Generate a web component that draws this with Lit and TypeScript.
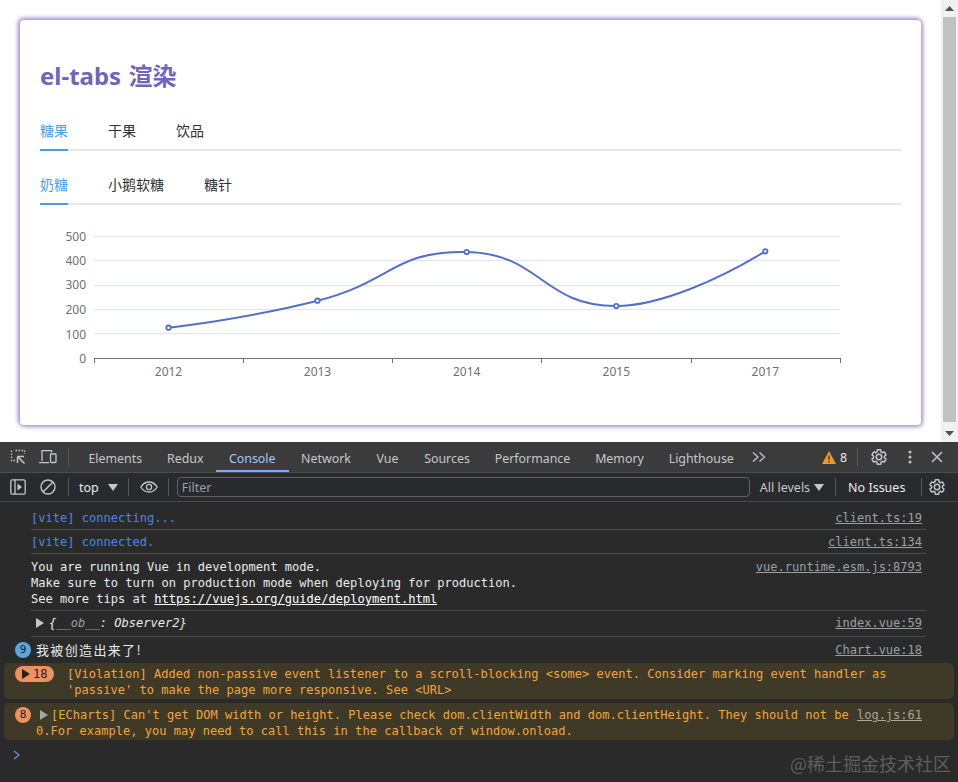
import { LitElement, html, css, svg } from "lit";
import { customElement } from "lit/decorators.js";

const GEAR = "M19.14 12.94c.04-.3.06-.61.06-.94 0-.32-.02-.64-.07-.94l2.03-1.58a.49.49 0 0 0 .12-.61l-1.92-3.32a.488.488 0 0 0-.59-.22l-2.39.96c-.5-.38-1.03-.7-1.62-.94l-.36-2.54a.484.484 0 0 0-.48-.41h-3.84c-.24 0-.43.17-.47.41l-.36 2.54c-.59.24-1.13.57-1.62.94l-2.39-.96c-.22-.08-.47 0-.59.22L2.74 8.87c-.12.21-.08.47.12.61l2.03 1.58c-.05.3-.09.63-.09.94s.02.64.07.94l-2.03 1.58a.49.49 0 0 0-.12.61l1.92 3.32c.12.22.37.29.59.22l2.39-.96c.5.38 1.03.7 1.62.94l.36 2.54c.05.24.24.41.48.41h3.84c.24 0 .44-.17.47-.41l.36-2.54c.59-.24 1.13-.56 1.62-.94l2.39.96c.22.08.47 0 .59-.22l1.92-3.32c.12-.22.07-.47-.12-.61l-2.01-1.58zM12 15.6c-1.98 0-3.6-1.62-3.6-3.6s1.62-3.6 3.6-3.6 3.6 1.62 3.6 3.6-1.62 3.6-3.6 3.6z";

const gear = () => html`<svg class="gear" width="18" height="18" viewBox="0 0 24 24"><path d=${GEAR} fill="none" stroke="#c4c7cc" stroke-width="1.9"/></svg>`;

const tri = (fill: string) => html`<svg class="tri" width="8" height="10" viewBox="0 0 8 10"><path d="M0 0 L8 5 L0 10Z" fill=${fill}/></svg>`;

const TABS: [string, number][] = [
  ["Elements", 78.5],
  ["Redux", 61.5],
  ["Console", 72.5],
  ["Network", 75],
  ["Vue", 48],
  ["Sources", 71],
  ["Performance", 100],
  ["Memory", 74],
  ["Lighthouse", 89.5],
];
const GRID = [237.5, 261.5, 286.5, 310.5, 334.5];
const YLABELS = ["500", "400", "300", "200", "100", "0"];
const YPOS = [237, 261.5, 285.5, 310.5, 335, 359];
const TICKS = [94.5, 243.5, 392.5, 541.5, 691.5, 840.5];
const POINTS: [number, number, string][] = [
  [168.5, 328.7, "2012"],
  [317.5, 301.7, "2013"],
  [466.7, 253, "2014"],
  [616.3, 307, "2015"],
  [765.3, 252.3, "2017"],
];
const CURVE = "M168.5 328.7 C168.5 328.7 244.5 320.2 317.5 301.7 C393.5 282.4 392.7 251.7 466.7 253 C541 254.3 542 307.2 616.3 307 C660 307 720 280 765.3 252.3";

@customElement("app-root")
export class AppRoot extends LitElement {
  static styles = css`
    :host { display: block; width: 958px; height: 782px; overflow: hidden; position: relative; font-family: "Noto Sans", "Noto Sans CJK SC", sans-serif; background: #292a2d; }
    * { box-sizing: border-box; }
    .page { height: 442px; background: #fff; display: flex; }
    .view { flex: 1; padding: 20px 20px 0; min-width: 0; }
    .card { width: 901px; height: 405px; padding: 0 20px; border-radius: 4px; background: #fff; box-shadow: -1px -1px 4px 1px rgba(150, 115, 195, .75), 1px 1px 4px 1px rgba(140, 120, 170, .6); }
    h2 { margin: 0; padding-top: 39px; height: 91px; font-size: 24px; line-height: 34px; font-weight: 700; color: #7065b8; word-spacing: 1px; font-family: "Noto Sans", "Noto Sans CJK SC", sans-serif; }
    .tabs { display: flex; height: 40px; border-bottom: 2px solid #e4e7ed; margin-bottom: 14px; gap: 40px; font-size: 14px; font-family: "Noto Sans CJK SC", sans-serif; }
    .tabs span { height: 40px; line-height: 38px; color: #303133; }
    .tabs span.on { color: #4a9fee; border-bottom: 2px solid #4f9be2; }
    .chart { display: block; margin-top: 1px; }
    .chart text { font-family: "Noto Sans", sans-serif; font-size: 12px; fill: #6e7079; }

    .sb { width: 17px; background: #f1f1f1; display: flex; flex-direction: column; align-items: center; }
    .sb .arrow { height: 17px; flex: none; display: flex; align-items: center; justify-content: center; }
    .sb .thumb { flex: 1; width: 13px; background: #c1c1c1; margin-bottom: 3px; }

    .dev { height: 340px; background: #292a2d; color: #e8eaed; display: flex; flex-direction: column; position: relative; }
    .bar1 { height: 31px; flex: none; background: #3b3b3b; border-bottom: 1px solid #4a4a4a; display: flex; align-items: center; padding-left: 10px; font-size: 12.4px; }
    .bar2 { height: 29px; flex: none; background: #292a2d; border-bottom: 1px solid #4a4a4a; display: flex; align-items: center; padding-left: 10px; font-size: 12.5px; }
    .sep { width: 1px; height: 18px; background: #55585c; flex: none; }
    .t { height: 30px; line-height: 33px; color: #c4c7cc; white-space: nowrap; text-align: center; flex: none; }
    .t.on { color: #a8c7fa; border-bottom: 2px solid #7cacf8; }
    .warn8 { margin-left: auto; display: flex; align-items: center; gap: 4px; color: #e8eaed; }
    .filter { width: 573px; height: 20px; border: 1px solid #5f6368; border-radius: 4px; margin-left: 8px; color: #9aa0a6; padding-left: 4px; line-height: 19px; }

    .log { flex: 1; padding-top: 8px; font-family: "DejaVu Sans Mono", "Noto Sans CJK SC", monospace; font-size: 12.06px; line-height: 16px; background: #2a2a2a; }
    .row { margin-left: 31px; width: 895px; padding: 0 4px 3px 0; border-bottom: 1px solid #4a4a4a; display: flex; justify-content: space-between; white-space: pre; }
    .row + .row { padding-top: 4px; }
    .row.r3 { padding-top: 5px; }
    .row.r4 { padding-top: 4px; padding-bottom: 5px; padding-left: 5px; align-items: center; }
    .link { color: #9aa0a6; text-decoration: underline; font-size: 12px; }
    .blue { color: #4d84ee; }
    .u { text-decoration: underline; color: #fff; }
    .it { font-style: italic; margin-left: 5px; }
    .it i { color: #9aa0a6; }
    .obj { display: flex; align-items: center; }
    .info { display: flex; align-items: center; padding: 5px 4px 5px 15px; margin-right: 32px; }
    .badge { width: 16px; height: 16px; border-radius: 50%; flex: none; display: flex; align-items: center; justify-content: center; font-size: 11px; line-height: 16px; color: #202124; }
    .badge.b { background: #5ba7dc; }
    .badge.o { background: #f0905f; }
    .cn { margin-left: 5px; font-family: "Noto Sans CJK SC", sans-serif; font-size: 13px; letter-spacing: 1.35px; flex: 1; color: #e8eaed; }
    .w { margin: 0 4px; background: #3f3927; color: #f0a63e; border-radius: 5px; }
    .w .link { color: #a9a69c; }
    .w1 { padding: 3px 0 1px 11px; display: flex; height: 36px; }
    .w1 .msg { white-space: pre; }
    .w2 { margin-top: 4px; padding: 4px 32px 1px 11px; height: 37px; display: flex; flex-direction: column; }
    .pill { width: 39px; height: 16px; border-radius: 8px; background: #f0905f; color: #202124; display: flex; align-items: center; padding-left: 7px; gap: 3px; flex: none; margin-right: 13px; font-size: 12px; }
    .l1 { display: flex; align-items: center; white-space: nowrap; height: 16px; }
    .l1 .tri { margin: 0 3px 0 9px; flex: none; }
    .l1 .link { margin-left: auto; }
    .l2 { padding-left: 21px; white-space: nowrap; height: 16px; }
    .prompt { padding: 10px 0 0 13px; display: flex; }
    .wm { position: absolute; left: 790px; top: 308px; font-family: "Noto Sans CJK SC", sans-serif; font-size: 18px; line-height: 26px; color: #5e5e5e; white-space: nowrap; }
  `;

  chart() {
    return svg`
      ${GRID.map((y) => svg`<line x1="94" x2="840" y1=${y} y2=${y} stroke="#e0e6f1"/>`)}
      <line x1="94" x2="841" y1="359.5" y2="359.5" stroke="#6e7079"/>
      ${TICKS.map((x) => svg`<line x1=${x} x2=${x} y1="359" y2="364" stroke="#6e7079"/>`)}
      ${YLABELS.map((l, i) => svg`<text x="86" y=${YPOS[i]} text-anchor="end" dominant-baseline="central">${l}</text>`)}
      ${POINTS.map((p) => svg`<text x=${p[0]} y="372" text-anchor="middle" dominant-baseline="central">${p[2]}</text>`)}
      <path d=${CURVE} fill="none" stroke="#5470c6" stroke-width="2"/>
      ${POINTS.map((p) => svg`<circle cx=${p[0]} cy=${p[1]} r="2.2" fill="#fff" stroke="#5470c6" stroke-width="1.8"/>`)}
    `;
  }

  render() {
    return html`
      <div class="page">
        <div class="view">
          <div class="card">
            <h2>el-tabs 渲染</h2>
            <div class="tabs"><span class="on">糖果</span><span>干果</span><span>饮品</span></div>
            <div class="tabs"><span class="on">奶糖</span><span>小鹅软糖</span><span>糖针</span></div>
            <svg class="chart" width="861" height="200" viewBox="40 220 861 200">${this.chart()}</svg>
          </div>
        </div>
        <div class="sb">
          <div class="arrow"><svg width="9" height="5"><path d="M0 5 L4.5 0 L9 5Z" fill="#505050"/></svg></div>
          <div class="thumb"></div>
          <div class="arrow"><svg width="9" height="5"><path d="M0 0 L4.5 5 L9 0Z" fill="#505050"/></svg></div>
        </div>
      </div>
      <div class="dev">
        <div class="bar1">
          <svg width="16" height="16" viewBox="0 0 16 16" fill="none" stroke="#c4c7cc" stroke-width="1.3">
            <path d="M5.5 1.500H14.500V5M1.500 1.500V11.500H5" stroke-dasharray="1.6 1.4"/>
            <path d="M7.500 7.500H14M7.500 7.500V14M7.500 7.500L14.500 14.500" stroke-width="1.5"/>
          </svg>
          <svg style="margin-left:13px" width="18" height="16" viewBox="0 0 18 16" fill="none" stroke="#c4c7cc" stroke-width="1.3">
            <path d="M3 12V1.700H12.500V3.500M0 13.600H10"/><rect x="11.500" y="5" width="5.500" height="8.500" rx=".7"/>
          </svg>
          <div class="sep" style="margin:0 7px 0 11px"></div>
          ${TABS.map(
            ([t, w]) => html`<div class="t ${t === "Console" ? "on" : ""}" style="width:${w}px">${t}</div>`
          )}
          <svg style="margin-left:6px" width="14" height="12" viewBox="0 0 14 12" fill="none" stroke="#c4c7cc" stroke-width="1.3"><path d="M1 1.500L6 6L1 10.500M7.500 1.500L12.500 6L7.500 10.500"/></svg>
          <div class="warn8">
            <svg width="14" height="13" viewBox="0 0 14 13"><path d="M7 0L14 13H0Z" fill="#ec9a2a"/><path d="M6.300 4.500H7.700V9H6.300ZM6.300 10H7.700V11.400H6.300Z" fill="#3b3b3b"/></svg>
            <span>8</span>
          </div>
          <div class="sep" style="margin-left:10px"></div>
          <div style="margin-left:12px;display:flex">${gear()}</div>
          <svg style="margin-left:20px" width="4" height="14" viewBox="0 0 4 14" fill="#c4c7cc"><circle cx="2" cy="2" r="1.5"/><circle cx="2" cy="7" r="1.5"/><circle cx="2" cy="12" r="1.5"/></svg>
          <svg style="margin:0 15px 0 19px" width="12" height="12" viewBox="0 0 12 12" stroke="#c4c7cc" stroke-width="1.5"><path d="M1 1L11 11M11 1L1 11"/></svg>
        </div>
        <div class="bar2">
          <svg width="16" height="16" viewBox="0 0 16 16" fill="none" stroke="#c4c7cc" stroke-width="1.3"><rect x=".8" y=".8" width="14.400" height="14.400" rx="1.500"/><path d="M5 1V15"/><path d="M7.500 4.500L12 8L7.500 11.500Z" fill="#c4c7cc" stroke="none"/></svg>
          <svg style="margin-left:14px" width="16" height="16" viewBox="0 0 16 16" fill="none" stroke="#c4c7cc" stroke-width="1.4"><circle cx="8" cy="8" r="7"/><path d="M3 13L13 3"/></svg>
          <div class="sep" style="margin:0 10px 0 12px"></div>
          <span style="color:#e8eaed">top</span>
          <svg style="margin-left:9px" width="10" height="7"><path d="M0 0H10L5 7Z" fill="#c4c7cc"/></svg>
          <div class="sep" style="margin:0 11px 0 10px"></div>
          <svg width="18" height="12" viewBox="0 0 18 12" fill="none" stroke="#c4c7cc" stroke-width="1.3"><path d="M.8 6C3 2.500 6 1 9 1s6 1.500 8.200 5C15 9.500 12 11 9 11S3 9.500.8 6Z"/><circle cx="9" cy="6" r="2.600"/></svg>
          <div class="sep" style="margin-left:10px"></div>
          <div class="filter">Filter</div>
          <span style="margin-left:10px;color:#c4c7cc;white-space:nowrap">All levels</span>
          <svg style="margin-left:4px" width="10" height="7"><path d="M0 0H10L5 7Z" fill="#c4c7cc"/></svg>
          <div class="sep" style="margin:0 12px 0 11px"></div>
          <span style="white-space:nowrap;color:#e8eaed">No Issues</span>
          <div class="sep" style="margin-left:16px"></div>
          <div style="margin-left:6px;display:flex">${gear()}</div>
        </div>
        <div class="log">
          <div class="row"><span class="blue">[vite] connecting...</span><span class="link">client.ts:19</span></div>
          <div class="row"><span class="blue">[vite] connected.</span><span class="link">client.ts:134</span></div>
          <div class="row r3"><span>You are running Vue in development mode.
Make sure to turn on production mode when deploying for production.
See more tips at <span class="u">https://vuejs.org/guide/deployment.html</span></span><span class="link">vue.runtime.esm.js:8793</span></div>
          <div class="row r4"><span class="obj">${tri("#c4c7cc")}<span class="it">{<i>__ob__</i>: Observer2}</span></span><span class="link">index.vue:59</span></div>
          <div class="info"><span class="badge b">9</span><span class="cn">我被创造出来了!</span><span class="link">Chart.vue:18</span></div>
          <div class="w w1">
            <span class="pill">${tri("#202124")}18</span>
            <span class="msg">[Violation] Added non-passive event listener to a scroll-blocking &lt;some&gt; event. Consider marking event handler as
'passive' to make the page more responsive. See &lt;URL&gt;</span>
          </div>
          <div class="w w2">
            <div class="l1"><span class="badge o">8</span>${tri("#a5a5a5")}<span>[ECharts] Can't get DOM width or height. Please check dom.clientWidth and dom.clientHeight. They should not be</span><span class="link">log.js:61</span></div>
            <div class="l2">0.For example, you may need to call this in the callback of window.onload.</div>
          </div>
          <div class="prompt"><svg width="7" height="10" viewBox="0 0 7 10" fill="none" stroke="#5f8fe8" stroke-width="1.3"><path d="M1 1L6 5L1 9"/></svg></div>
        </div>
        <div class="wm">@稀土掘金技术社区</div>
      </div>
    `;
  }
}
